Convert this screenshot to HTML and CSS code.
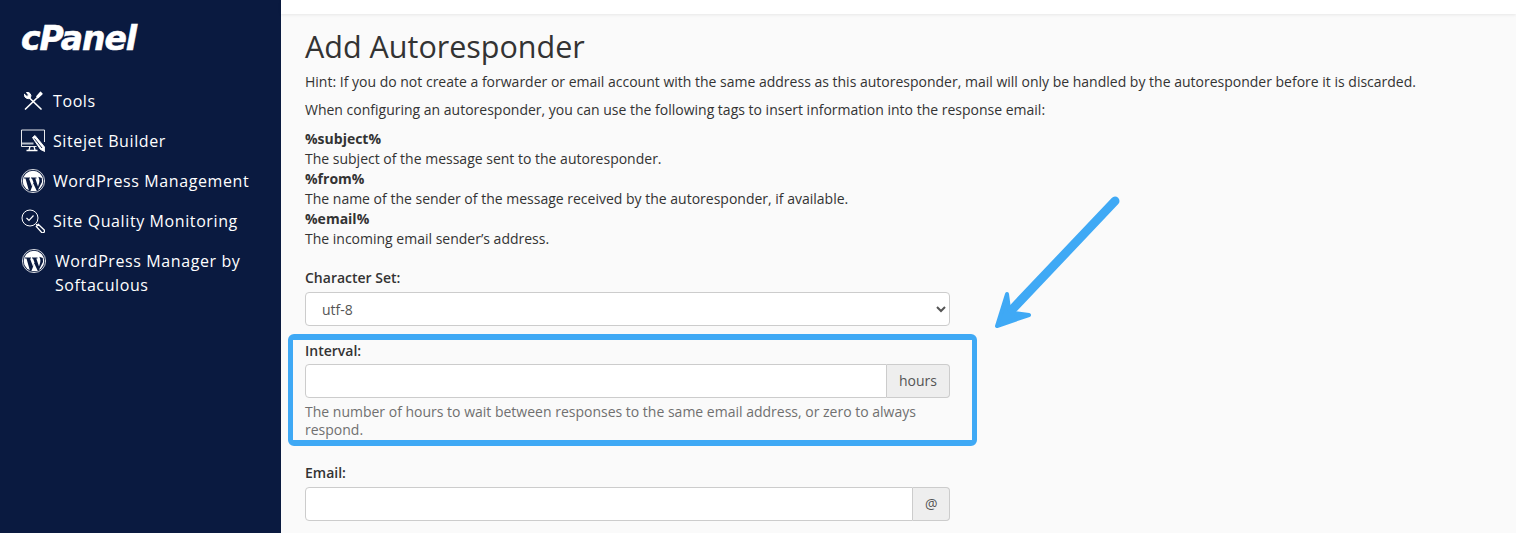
FILE: index.html
```html
<!DOCTYPE html>
<html lang="en">
<head>
  <meta charset="UTF-8">
  <title>Add Autoresponder</title>
  <link rel="stylesheet" href="styles.css">
</head>
<body>
  <aside class="sidebar">
    <div class="logo">cPanel</div>
    <ul class="nav">
      <li>
        <svg class="nav-icon" viewBox="0 0 24 24" fill="none" stroke="#fff" stroke-width="1.700" stroke-linecap="round" stroke-linejoin="round">
          <path d="M4.500 20 L16.500 8.500"/>
          <path d="M16 7.500 L19.500 3.500 L20.800 4.800 L17 8.500 Z" fill="#fff"/>
          <path d="M8 8.500 L20 20"/>
          <path d="M3.500 5.500 L6 7.500 L7.500 6 L5.500 3.500 A3.500 3.500 0 0 1 9.500 8.500 A3.500 3.500 0 0 1 3.500 5.500 Z" fill="#fff" stroke-width="1"/>
        </svg>
        Tools
      </li>
      <li>
        <svg class="nav-icon" viewBox="0 0 24 24" fill="none" stroke="#fff" stroke-width=".9">
          <path d="M15.500 17.500 H.5 V1 H23.500 V13"/>
          <path d="M1 14.500 H12.500" stroke="#b9c0cc" stroke-width="2"/>
          <path d="M9 17.500 L8 21 M13 17.500 L14 21 M5.500 21.500 H16.500" stroke-width="1.300"/>
          <path d="M11.500 8.500 L14 6.500 L23.500 18 L23.800 22.500 L19.500 20.500 Z" fill="#fff"/>
          <path d="M13.500 9.500 L21 19" stroke="#0a1a40"/>
        </svg>
        Sitejet Builder
      </li>
      <li>
        <svg class="nav-icon" viewBox="0 0 24 24">
          <circle cx="12" cy="12" r="11.600" fill="none" stroke="#fff" stroke-width=".8"/>
          <circle cx="12" cy="12" r="10.300" fill="#fff"/>
          <path d="M3 8.500 H9 V9.400 H8 L11 17.500 L12.500 13.600 L11 9.400 H10 V8.500 H15.500 V9.400 H14.300 L17 17.500 L18.200 13.500 C18.800 11 18 9.500 17.300 7.800 L20.800 9 L21 13 L16.600 21.500 H15.600 L12.300 14.600 L9.400 22 H8 L4.500 9.400 H3 Z" fill="#0a1a40"/>
        </svg>
        WordPress Management
      </li>
      <li>
        <svg class="nav-icon" viewBox="0 0 24 24" fill="none" stroke="#fff" stroke-width="1">
          <circle cx="9" cy="9" r="8"/>
          <path d="M5.500 9 L8 11.500 L12.500 6.500" stroke-width="1.200"/>
          <path d="M15 15 L16.500 16.500"/>
          <path d="M17.200 15.300 L23 20.800 A1.700 1.700 0 0 1 20.500 23.300 L15.300 17.500 Z" stroke-width="1.300"/>
        </svg>
        Site Quality Monitoring
      </li>
      <li class="nav-wide">
        <svg class="nav-icon" viewBox="0 0 24 24">
          <circle cx="12" cy="12" r="11.600" fill="none" stroke="#fff" stroke-width=".8"/>
          <circle cx="12" cy="12" r="10.300" fill="#fff"/>
          <path d="M3 8.500 H9 V9.400 H8 L11 17.500 L12.500 13.600 L11 9.400 H10 V8.500 H15.500 V9.400 H14.300 L17 17.500 L18.200 13.500 C18.800 11 18 9.500 17.300 7.800 L20.800 9 L21 13 L16.600 21.500 H15.600 L12.300 14.600 L9.400 22 H8 L4.500 9.400 H3 Z" fill="#0a1a40"/>
        </svg>
        <span>WordPress Manager by Softaculous</span>
      </li>
    </ul>
  </aside>

  <div class="page">
    <div class="topbar"></div>
    <main class="content">
      <h1>Add Autoresponder</h1>
      <p>Hint: If you do not create a forwarder or email account with the same address as this autoresponder, mail will only be handled by the autoresponder before it is discarded.</p>
      <p>When configuring an autoresponder, you can use the following tags to insert information into the response email:</p>
      <dl class="tags">
        <dt>%subject%</dt>
        <dd>The subject of the message sent to the autoresponder.</dd>
        <dt>%from%</dt>
        <dd>The name of the sender of the message received by the autoresponder, if available.</dd>
        <dt>%email%</dt>
        <dd>The incoming email sender’s address.</dd>
      </dl>

      <form class="form">
        <div class="field">
          <label for="charset">Character Set:</label>
          <select id="charset" class="control"><option>utf-8</option></select>
        </div>
        <div class="field field-interval">
          <label for="interval">Interval:</label>
          <div class="input-group">
            <input id="interval" class="control" type="text">
            <span class="addon">hours</span>
          </div>
          <div class="help">The number of hours to wait between responses to the same email address, or zero to always respond.</div>
        </div>
        <div class="field">
          <label for="email">Email:</label>
          <div class="input-group">
            <input id="email" class="control" type="text">
            <span class="addon addon-at">@</span>
          </div>
        </div>
      </form>
    </main>

    <div class="highlight"></div>
    <svg class="arrow" viewBox="0 0 140 150" fill="none" stroke="#3fa9f5" stroke-linecap="round" stroke-linejoin="round">
      <path d="M126 8 L16 124" stroke-width="9"/>
      <path d="M18 101 L8 133 L40 122 L24 120 L20 116 Z" fill="#3fa9f5" stroke-width="4"/>
    </svg>
  </div>
</body>
</html>
```

FILE: styles.css
```css
* {
  box-sizing: border-box;
  padding: 0;
  margin: 0;
}
html, body {
  height: 100%;
  overflow: hidden;
}
body {
  display: flex;
  color: #333;
  background: #fafafa;
  font-family: "Open Sans", sans-serif;
  font-size: 14px;
  line-height: 20px;
}

.sidebar {
  flex: none;
  width: 281px;
  padding: 26px 20px 0 21px;
  background: #0a1a40;
  color: #fff;
}
.logo {
  height: 26px;
  margin-bottom: 37px;
  font-family: "DejaVu Sans", sans-serif;
  font-size: 33px;
  line-height: 26px;
  font-weight: 700;
  font-style: italic;
  letter-spacing: -1px;
  -webkit-text-stroke: 0.6px #fff;
}
.nav {
  list-style: none;
  font-size: 16px;
  line-height: 24px;
  letter-spacing: 0.6px;
}
.nav li {
  display: flex;
  align-items: center;
  gap: 8px;
  margin-bottom: 16px;
}
.nav li.nav-wide {
  align-items: flex-start;
  gap: 9px;
  padding-left: 1px;
}
.nav-icon {
  flex: none;
  width: 24px;
  height: 24px;
}

.page {
  position: relative;
  flex: 1;
  min-width: 0;
}
.topbar {
  height: 14px;
  background: #fff;
  box-shadow: 0 1px 3px rgba(0, 0, 0, 0.08);
}
.content {
  padding: 12px 24px 0;
}
h1 {
  height: 46px;
  font-size: 30.500px;
  line-height: 40px;
  font-weight: 400;
}
p {
  margin-bottom: 8px;
}
.tags {
  margin-top: 9px;
  margin-bottom: 19px;
}
.tags dt {
  font-weight: 700;
}

.form {
  width: 645px;
}
.field {
  margin-bottom: 15px;
}
.field-interval {
  margin-bottom: 24px;
}
.field-interval label {
  margin-bottom: 3px;
}
label {
  display: block;
  margin-bottom: 4px;
  font-weight: 600;
}
.control {
  display: block;
  width: 100%;
  height: 34px;
  padding: 6px 12px;
  border: 1px solid #ccc;
  border-radius: 4px;
  background: #fff;
  color: #555;
  font: inherit;
}
.input-group {
  display: flex;
}
.input-group .control {
  flex: 1;
  min-width: 0;
  border-radius: 4px 0 0 4px;
}
.addon {
  padding: 6px 12px;
  border: 1px solid #ccc;
  border-left: 0;
  border-radius: 0 4px 4px 0;
  background: #eee;
  color: #555;
}
.addon-at {
  padding: 6px 11.500px;
}
.help {
  margin-top: 5px;
  color: #707070;
  line-height: 18px;
}

.highlight {
  position: absolute;
  left: 7px;
  top: 334px;
  width: 689px;
  height: 112px;
  border: solid #3fa9f5;
  border-width: 6px 5px;
  border-radius: 6px;
}
.arrow {
  position: absolute;
  left: 708px;
  top: 193px;
  width: 140px;
  height: 150px;
}
```
